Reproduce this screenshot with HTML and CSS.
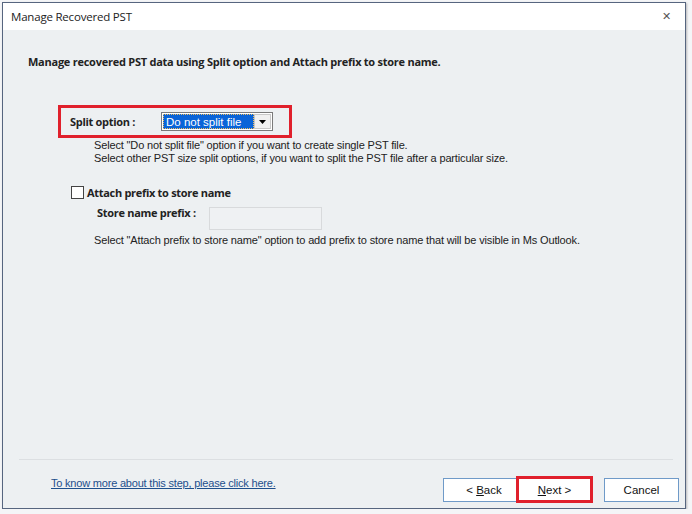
FILE: index.html
```html
<!DOCTYPE html>
<html lang="en">
<head>
    <meta charset="UTF-8">
    <title>Manage Recovered PST</title>
    <link rel="stylesheet" href="styles.css">
</head>
<body>
    <div class="window">
        <div class="titlebar">
            <span class="title">Manage Recovered PST</span>
            <span class="close">&#x2715;</span>
        </div>
        <div class="content">
            <h1 class="intro">Manage recovered PST data using Split option and Attach prefix to store name.</h1>

            <div class="split-box">
                <span class="label">Split option :</span>
                <div class="combo">
                    <span class="combo-value">Do not split file</span>
                    <span class="combo-btn">
                        <svg width="7" height="4" viewBox="0 0 7 4"><path d="M0 0h7L3.5 4z" fill="#000"/></svg>
                    </span>
                </div>
            </div>
            <p class="hint split-hint">Select "Do not split file" option if you want to create single PST file.<br>Select other PST size split options, if you want to split the PST file after a particular size.</p>

            <div class="check-row">
                <span class="checkbox"></span>
                <span class="label">Attach prefix to store name</span>
            </div>
            <div class="prefix-row">
                <span class="label">Store name prefix :</span>
                <span class="textbox"></span>
            </div>
            <p class="hint prefix-hint">Select "Attach prefix to store name" option to add prefix to store name that will be visible in Ms Outlook.</p>

            <div class="spacer"></div>

            <div class="footer">
                <a class="help-link" href="#">To know more about this step, please click here.</a>
                <div class="buttons">
                    <button class="btn btn-back"><span>&lt; <u>B</u>ack</span></button>
                    <button class="btn btn-next"><span><u>N</u>ext &gt;</span></button>
                    <button class="btn btn-cancel">Cancel</button>
                </div>
            </div>
        </div>
    </div>
</body>
</html>
```

FILE: styles.css
```css
body {
    margin: 0;
    padding: 0;
    background: #f4f5f7;
    font-family: "Liberation Sans", Arial, sans-serif;
    color: #1a1a1a;
}

.window {
    margin: 2px 0 0 2px;
    width: 682px;
    height: 505px;
    border: 1px solid #56657f;
    display: flex;
    flex-direction: column;
    background: #edf0f2;
    box-shadow: 1px 1px 2px rgba(0,0,0,0.25);
}

.titlebar {
    height: 27px;
    background: #fff;
    display: flex;
    align-items: center;
    justify-content: space-between;
    padding: 0 14px 0 8px;
    flex-shrink: 0;
}

.title {
    font-family: "Open Sans", sans-serif;
    font-size: 11.5px;
    color: #222;
    letter-spacing: -0.2px;
}

.close {
    font-size: 11px;
    color: #555;
}

.content {
    flex: 1;
    display: flex;
    flex-direction: column;
}

.intro {
    font-family: "Open Sans", sans-serif;
    font-weight: bold;
    font-size: 11px;
    letter-spacing: -0.25px;
    color: #222;
    margin: 24px 0 0 25px;
}

.label {
    font-family: "Open Sans", sans-serif;
    font-weight: bold;
    font-size: 11px;
    line-height: 15px;
    letter-spacing: -0.3px;
    color: #222;
}

.split-box {
    margin: 36px 0 0 55px;
    width: 219px;
    height: 27px;
    border: 3px solid #e0202c;
    display: flex;
    align-items: center;
    padding-left: 9px;
}

.split-box .label {
    width: 91px;
}

.combo {
    width: 112px;
    height: 19px;
    border: 1px solid #7a7a7a;
    background: #fff;
    display: flex;
    padding: 1px;
    box-sizing: border-box;
}

.combo-value {
    flex: 1;
    background: #0a64d8;
    color: #fff;
    font-size: 11.5px;
    line-height: 15px;
    padding-left: 2px;
    border: 1px dotted #f0c060;
}

.combo-btn {
    width: 15px;
    background: #f0f0f0;
    border: 1px solid #c8c8c8;
    display: flex;
    align-items: center;
    justify-content: center;
}

.hint {
    font-size: 11px;
    letter-spacing: -0.15px;
    color: #222;
    margin: 0;
    line-height: 13px;
}

.split-hint {
    margin: 1px 0 0 91px;
}

.check-row {
    display: flex;
    align-items: center;
    margin: 20px 0 0 68px;
}

.checkbox {
    width: 11px;
    height: 11px;
    border: 1px solid #444;
    background: #fff;
    margin-right: 3px;
}

.prefix-row {
    display: flex;
    align-items: flex-start;
    margin: 5px 0 0 94px;
}

.prefix-row .label {
    width: 112px;
}

.textbox {
    width: 111px;
    height: 21px;
    margin-top: 2px;
    border: 1px solid #d8dadc;
    background: #eff1f3;
}

.prefix-hint {
    margin: 4px 0 0 91px;
}

.spacer {
    flex: 1;
    border-bottom: 1px solid #dcdfe2;
    margin: 0 12px 0 16px;
}

.footer {
    height: 48px;
    display: flex;
    align-items: flex-start;
    justify-content: space-between;
    padding: 16px 6px 0 48px;
    box-sizing: border-box;
}

.help-link {
    font-size: 11px;
    line-height: 13px;
    color: #1e4f8c;
    letter-spacing: -0.2px;
    margin-top: 1px;
}

.buttons {
    display: flex;
    align-items: center;
}

.btn {
    font-family: "Liberation Sans", Arial, sans-serif;
    font-size: 11.5px;
    color: #111;
    background: #fff;
    border: 1px solid #6f9ac8;
    height: 24px;
    padding: 0;
    box-sizing: border-box;
}

.btn-back {
    width: 82px;
}

.btn-next {
    width: 77px;
    height: 27px;
    border: 3px solid #e0202c;
    margin-left: -9px;
    position: relative;
}

.btn-cancel {
    width: 75px;
    margin-left: 11px;
}
```
